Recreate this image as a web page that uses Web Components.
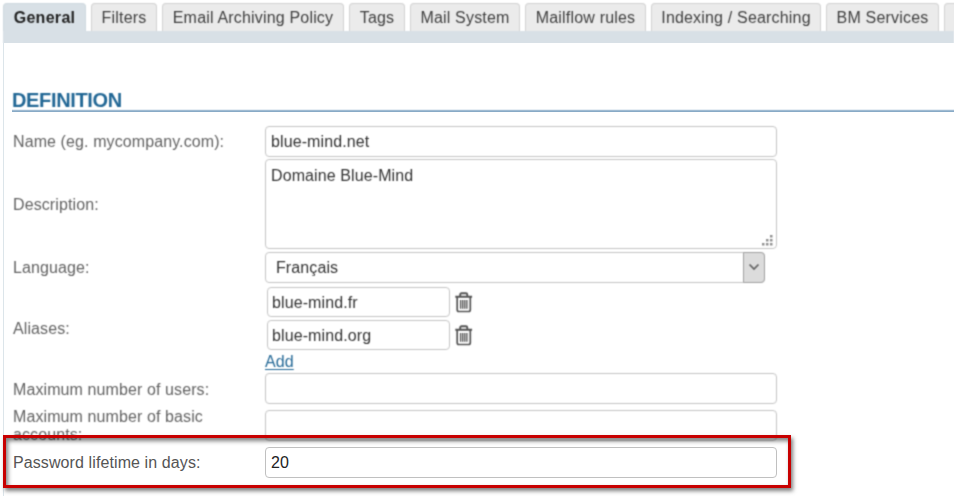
<!DOCTYPE html>
<html lang="en">
<head>
<meta charset="utf-8">
<title>Domain settings</title>
<style>
body{margin:0;width:954px;height:496px;overflow:hidden;background:#fff;font:16px/18px "Liberation Sans",Arial,sans-serif;letter-spacing:.1px;color:#444}
</style>
</head>
<body>
<domain-page></domain-page>
<script>
const define = (name, html, setup) => customElements.define(name, class extends HTMLElement {
  constructor() {
    super();
    this.attachShadow({mode: 'open'}).innerHTML = html;
  }
  connectedCallback() { if (setup) setup(this); }
});

define('tab-item', `<style>
:host{display:block;box-sizing:border-box;flex:none;width:var(--w);height:28px;padding:5px 0 0;text-align:center;letter-spacing:.18px;background:#ebebeb;border:1px solid #d2d2d2;border-bottom:0;border-radius:4px 4px 0 0;white-space:nowrap;color:#3f3f3f}
:host([active]){background:#d8e0e6;border-color:#cfd9df;font-weight:bold;letter-spacing:.3px;color:#222}
</style><slot></slot>`, el => el.style.setProperty('--w', el.getAttribute('width') + 'px'));

define('tab-bar', `<style>
:host{display:block;padding-top:3px}
nav{display:flex;gap:5px;padding-left:3px}
.strip{height:12px;margin-left:3px;background:#d8e0e6}
</style><nav><slot></slot></nav><div class="strip"></div>`);

define('section-title', `<style>
:host{display:block;box-sizing:border-box;height:23px;margin-left:8px;padding-top:1px;border-bottom:2px solid #7ea3c2;color:#0f5a8c;font-weight:bold;font-size:20px;line-height:20px;letter-spacing:-.35px}
</style><slot></slot>`);

define('form-row', `<style>
:host{display:grid;grid-template-columns:252px 1fr;align-items:center;height:var(--h);padding-left:9px}
.l{color:#555;width:225px;padding-top:2px}
.c{display:flex;flex-direction:column;align-items:flex-start}
</style><div class="l"></div><div class="c"><slot></slot></div>`, el => {
  el.style.setProperty('--h', el.getAttribute('height') + 'px');
  el.shadowRoot.querySelector('.l').textContent = el.getAttribute('label');
});

define('text-field', `<style>
:host{display:flex;align-items:center;box-sizing:border-box;width:512px;height:31px;padding:2px 0 0 5px;border:1px solid #c0c0c0;border-radius:4px;background:#fff;color:#222}
:host([small]){width:183px;height:30px;padding-left:4px;margin-left:2px}
</style><slot></slot>`);

define('text-area', `<style>
:host{display:flex;justify-content:space-between;box-sizing:border-box;width:512px;height:90px;padding:7px 2px 0 5px;border:1px solid #c0c0c0;border-radius:4px;color:#222}
svg{align-self:flex-end}
</style><span><slot></slot></span><svg width="13" height="13" fill="#858585"><path d="M9 0h2.5v2.5H9zM5 4h2.5v2.5H5zM9 4h2.5v2.5H9zM1 8h2.5v2.5H1zM5 8h2.5v2.5H5zM9 8h2.5v2.5H9z"/></svg>`);

define('select-field', `<style>
:host{display:flex;align-items:stretch;justify-content:space-between;box-sizing:border-box;width:500px;height:31px;border:1px solid #c0c0c0;border-radius:4px;color:#222}
span{padding:6px 0 0 10px}
b{display:flex;align-items:center;justify-content:center;box-sizing:border-box;width:22px;margin:-1px;border:1px solid #999;border-radius:0 4px 4px 0;background:#dadada}
</style><span><slot></slot></span><b><svg width="12" height="8" fill="none" stroke="#555" stroke-width="1.7"><path d="M1.5 1.5 6 6l4.500-4.500"/></svg></b>`);

define('alias-field', `<style>
:host{display:flex;align-items:center;gap:5px;height:33px}
</style><text-field small><slot></slot></text-field>
<svg width="18" height="21" viewBox="0 0 18 21" fill="none" stroke="#444"><path stroke-width="1.900" d="M.3 4.800h16.800M5.200 4V2.800q0-1.500 1.400-1.500h4.300q1.400 0 1.400 1.500V4"/><path stroke-width="1.700" d="M2.200 5v12.800q0 1.700 1.700 1.700h9.700q1.700 0 1.700-1.700V5"/><path stroke-width="1.300" d="M5.600 8v8.800M7.700 8v8.800M9.800 8v8.800M11.900 8v8.800"/></svg>`);

define('add-link', `<style>
:host{display:block;height:17px;padding-top:1px;color:#0f5a8c;text-decoration:underline;text-underline-offset:2px}
</style><slot></slot>`);

define('highlight-frame', `<style>
:host{position:absolute;left:3px;top:435px;width:788px;height:53px;box-sizing:border-box;border:3px solid #c80000;pointer-events:none;box-shadow:2px 3px 4px rgba(0,0,0,.5),inset 2px 3px 4px rgba(0,0,0,.5)}
</style>`);

define('domain-page', `<style>
:host{display:block;position:relative;width:954px;height:496px;overflow:hidden}
main{box-sizing:border-box;margin-left:3px;height:453px;padding-top:46px;border-left:1px solid #dce5ea}
.form{padding-top:12px}
.defs{position:absolute}
/* Everything outside the highlighted row is shown out of focus. */
tab-bar,section-title,form-row:not([focus]){filter:url(#soft)}
section-title,form-row:not([focus]){opacity:.92}
</style>
<svg class="defs" width="0" height="0"><filter id="soft" x="0" y="0" width="1" height="1" color-interpolation-filters="sRGB"><feConvolveMatrix order="3" kernelMatrix="1 3 1 3 9 3 1 3 1" divisor="25" edgeMode="duplicate"/></filter></svg>
<tab-bar>
<tab-item active width="83">General</tab-item><tab-item width="66">Filters</tab-item><tab-item width="182">Email Archiving Policy</tab-item><tab-item width="56">Tags</tab-item><tab-item width="110">Mail System</tab-item><tab-item width="121">Mailflow rules</tab-item><tab-item width="170">Indexing / Searching</tab-item><tab-item width="113">BM Services</tab-item><tab-item width="60"></tab-item>
</tab-bar>
<main>
<section-title>DEFINITION</section-title>
<div class="form">
<form-row height="34" label="Name (eg. mycompany.com):"><text-field>blue-mind.net</text-field></form-row>
<form-row height="92" label="Description:"><text-area>Domaine Blue-Mind</text-area></form-row>
<form-row height="34" label="Language:"><select-field>Français</select-field></form-row>
<form-row height="87" label="Aliases:"><alias-field>blue-mind.fr</alias-field><alias-field>blue-mind.org</alias-field><add-link>Add</add-link></form-row>
<form-row height="35" label="Maximum number of users:"><text-field></text-field></form-row>
<form-row height="38" label="Maximum number of basic accounts:"><text-field></text-field></form-row>
<form-row focus height="36" label="Password lifetime in days:"><text-field>20</text-field></form-row>
</div>
</main>
<highlight-frame></highlight-frame>`);
</script>
</body>
</html>
